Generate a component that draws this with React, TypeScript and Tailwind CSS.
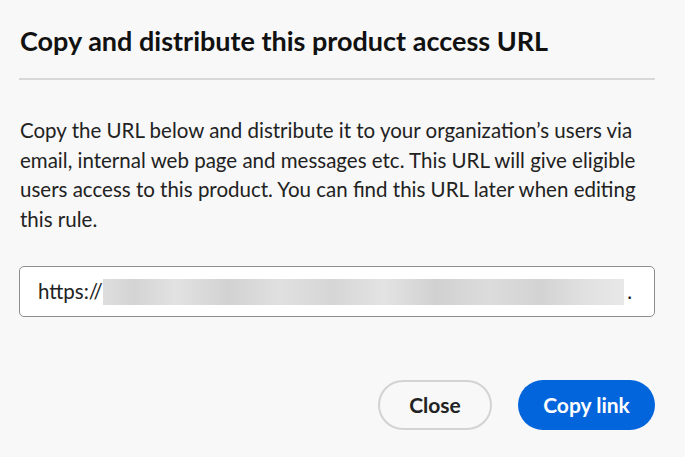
export default function App() {
  return (
    <div
      className="w-[685px] h-[457px] bg-[#f8f8f8] text-[#222222] pl-[20px] pr-[30px] overflow-hidden"
      style={{ fontFamily: 'Lato, "Noto Sans", sans-serif' }}
    >
      <h1 className="pt-[25px] text-[27px] leading-[32px] font-bold text-[#111111]">
        Copy and distribute this product access URL
      </h1>
      <div className="mt-[21px] h-[2px] bg-[#d8d8d8] -ml-px" />

      <p className="mt-[36px] text-[20.5px] leading-[29.5px] text-[#222222]">
        Copy the URL below and distribute it to your organization’s users via
        email, internal web page and messages etc. This URL will give eligible
        users access to this product. You can find this URL later when editing
        this rule.
      </p>

      <div className="mt-[32px] -ml-px h-[51px] rounded-[5px] border border-[#8e8e8e] bg-white flex items-center pl-[18px] pr-[22px] text-[20.5px]">
        <span>https://</span>
        <div className="flex-1 h-[26px] mt-[1px] mr-[3px] bg-[linear-gradient(90deg,#dedede_0%,#d4d4d4_6%,#e2e2e2_14%,#d2d2d2_24%,#e0e0e0_34%,#d6d6d6_44%,#e3e3e3_54%,#d1d1d1_64%,#dcdcdc_74%,#d3d3d3_84%,#e0e0e0_92%,#e8e8e8_100%)]" />
        <span>.</span>
      </div>

      <div className="mt-[63px] flex justify-end gap-[26px]">
        <button className="w-[114px] h-[50px] rounded-full border-2 border-[#d3d3d3] bg-[#f8f8f8] text-[21px] font-bold text-[#222222]">
          Close
        </button>
        <button className="w-[137px] h-[50px] rounded-full bg-[#0265dc] text-[21px] font-bold text-white">
          Copy link
        </button>
      </div>
    </div>
  )
}
